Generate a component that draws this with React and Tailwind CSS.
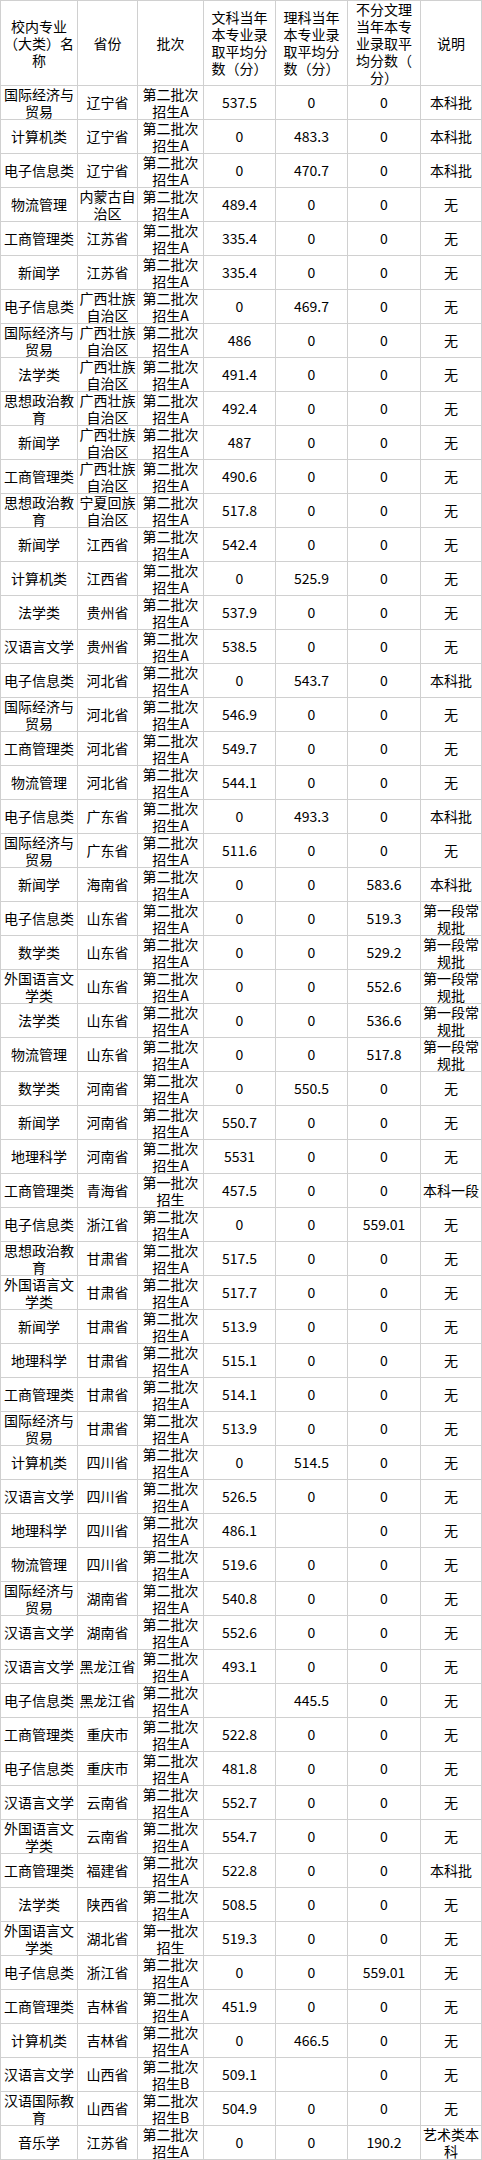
import React from "react";

const A = "第二批次\n招生A";
const B = "第二批次\n招生B";
const F = "第一批次\n招生";
const GX = "广西壮族\n自治区";
const SD = "第一段常\n规批";

const rows = [
  ["国际经济与\n贸易", "辽宁省", A, "537.5", "0", "0", "本科批"],
  ["计算机类", "辽宁省", A, "0", "483.3", "0", "本科批"],
  ["电子信息类", "辽宁省", A, "0", "470.7", "0", "本科批"],
  ["物流管理", "内蒙古自\n治区", A, "489.4", "0", "0", "无"],
  ["工商管理类", "江苏省", A, "335.4", "0", "0", "无"],
  ["新闻学", "江苏省", A, "335.4", "0", "0", "无"],
  ["电子信息类", GX, A, "0", "469.7", "0", "无"],
  ["国际经济与\n贸易", GX, A, "486", "0", "0", "无"],
  ["法学类", GX, A, "491.4", "0", "0", "无"],
  ["思想政治教\n育", GX, A, "492.4", "0", "0", "无"],
  ["新闻学", GX, A, "487", "0", "0", "无"],
  ["工商管理类", GX, A, "490.6", "0", "0", "无"],
  ["思想政治教\n育", "宁夏回族\n自治区", A, "517.8", "0", "0", "无"],
  ["新闻学", "江西省", A, "542.4", "0", "0", "无"],
  ["计算机类", "江西省", A, "0", "525.9", "0", "无"],
  ["法学类", "贵州省", A, "537.9", "0", "0", "无"],
  ["汉语言文学", "贵州省", A, "538.5", "0", "0", "无"],
  ["电子信息类", "河北省", A, "0", "543.7", "0", "本科批"],
  ["国际经济与\n贸易", "河北省", A, "546.9", "0", "0", "无"],
  ["工商管理类", "河北省", A, "549.7", "0", "0", "无"],
  ["物流管理", "河北省", A, "544.1", "0", "0", "无"],
  ["电子信息类", "广东省", A, "0", "493.3", "0", "本科批"],
  ["国际经济与\n贸易", "广东省", A, "511.6", "0", "0", "无"],
  ["新闻学", "海南省", A, "0", "0", "583.6", "本科批"],
  ["电子信息类", "山东省", A, "0", "0", "519.3", SD],
  ["数学类", "山东省", A, "0", "0", "529.2", SD],
  ["外国语言文\n学类", "山东省", A, "0", "0", "552.6", SD],
  ["法学类", "山东省", A, "0", "0", "536.6", SD],
  ["物流管理", "山东省", A, "0", "0", "517.8", SD],
  ["数学类", "河南省", A, "0", "550.5", "0", "无"],
  ["新闻学", "河南省", A, "550.7", "0", "0", "无"],
  ["地理科学", "河南省", A, "5531", "0", "0", "无"],
  ["工商管理类", "青海省", F, "457.5", "0", "0", "本科一段"],
  ["电子信息类", "浙江省", A, "0", "0", "559.01", "无"],
  ["思想政治教\n育", "甘肃省", A, "517.5", "0", "0", "无"],
  ["外国语言文\n学类", "甘肃省", A, "517.7", "0", "0", "无"],
  ["新闻学", "甘肃省", A, "513.9", "0", "0", "无"],
  ["地理科学", "甘肃省", A, "515.1", "0", "0", "无"],
  ["工商管理类", "甘肃省", A, "514.1", "0", "0", "无"],
  ["国际经济与\n贸易", "甘肃省", A, "513.9", "0", "0", "无"],
  ["计算机类", "四川省", A, "0", "514.5", "0", "无"],
  ["汉语言文学", "四川省", A, "526.5", "0", "0", "无"],
  ["地理科学", "四川省", A, "486.1", "", "0", "无"],
  ["物流管理", "四川省", A, "519.6", "0", "0", "无"],
  ["国际经济与\n贸易", "湖南省", A, "540.8", "0", "0", "无"],
  ["汉语言文学", "湖南省", A, "552.6", "0", "0", "无"],
  ["汉语言文学", "黑龙江省", A, "493.1", "0", "0", "无"],
  ["电子信息类", "黑龙江省", A, "", "445.5", "0", "无"],
  ["工商管理类", "重庆市", A, "522.8", "0", "0", "无"],
  ["电子信息类", "重庆市", A, "481.8", "0", "0", "无"],
  ["汉语言文学", "云南省", A, "552.7", "0", "0", "无"],
  ["外国语言文\n学类", "云南省", A, "554.7", "0", "0", "无"],
  ["工商管理类", "福建省", A, "522.8", "0", "0", "本科批"],
  ["法学类", "陕西省", A, "508.5", "0", "0", "无"],
  ["外国语言文\n学类", "湖北省", F, "519.3", "0", "0", "无"],
  ["电子信息类", "浙江省", A, "0", "0", "559.01", "无"],
  ["工商管理类", "吉林省", A, "451.9", "0", "0", "无"],
  ["计算机类", "吉林省", A, "0", "466.5", "0", "无"],
  ["汉语言文学", "山西省", B, "509.1", "", "0", "无"],
  ["汉语国际教\n育", "山西省", B, "504.9", "0", "0", "无"],
  ["音乐学", "江苏省", A, "0", "0", "190.2", "艺术类本\n科"],
];

const header = [
  "校内专业\n（大类）名\n称",
  "省份",
  "批次",
  "文科当年\n本专业录\n取平均分\n数（分）",
  "理科当年\n本专业录\n取平均分\n数（分）",
  "不分文理\n当年本专\n业录取平\n均分数（\n分）",
  "说明",
];

function Cell({ children, h }) {
  return (
    <div
      className={`${h} flex items-center justify-center overflow-hidden border-r border-b border-[#d0d0d0] text-center whitespace-pre-line leading-[17px]`}
    >
      <span className="block">{children}</span>
    </div>
  );
}

export default function App() {
  return (
    <div
      className="w-[482px] bg-white text-black text-[14px]"
      style={{ fontFamily: '"Noto Sans CJK SC", "Noto Sans", sans-serif' }}
    >
      <div className="grid grid-cols-[77px_60px_66px_72px_72px_73px_61px] border-l border-t border-[#d0d0d0]">
        {header.map((t, i) => (
          <Cell key={"h" + i} h="h-[85px]">
            {t}
          </Cell>
        ))}
        {rows.map((r, ri) =>
          r.map((t, ci) => (
            <Cell key={ri + "-" + ci} h="h-[34px]">
              {t}
            </Cell>
          ))
        )}
      </div>
    </div>
  );
}
